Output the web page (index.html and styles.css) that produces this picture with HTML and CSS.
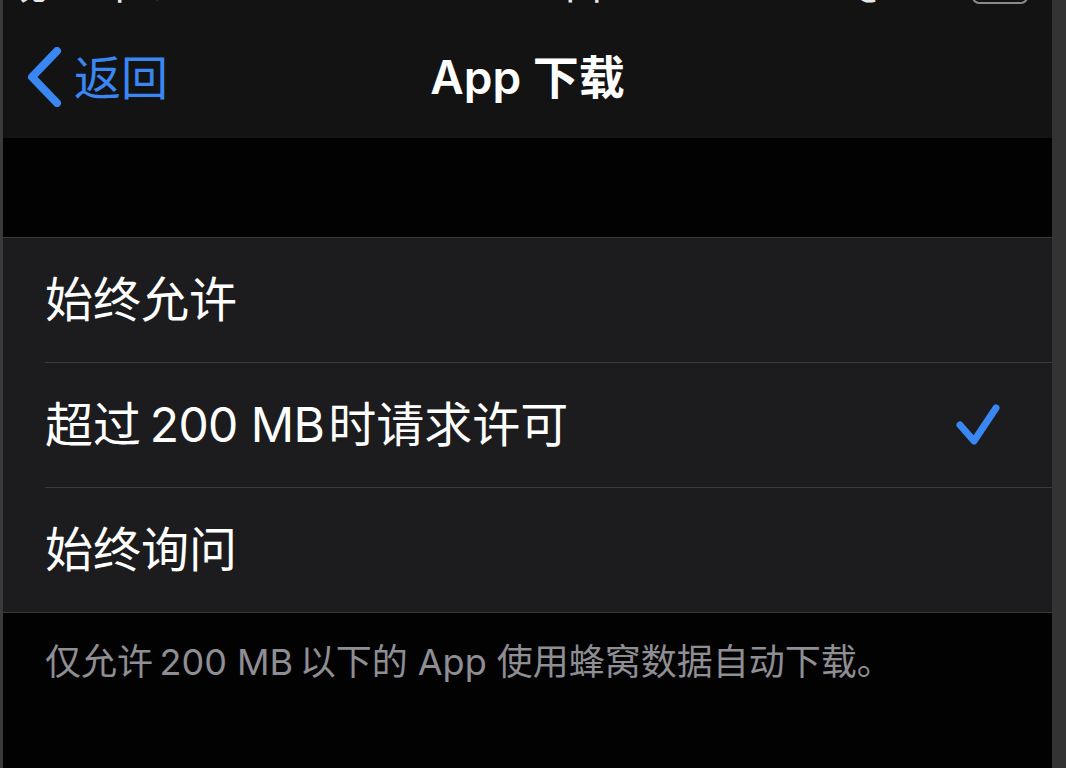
FILE: index.html
```html
<!DOCTYPE html>
<html lang="zh-CN">
<head>
<meta charset="utf-8">
<title>App 下载</title>
<link rel="stylesheet" href="styles.css">
</head>
<body>
<div class="screen">
  <div class="edge-left"></div>
  <div class="main">
    <div class="status">
      <div class="status-left"><span>无 SIM 卡</span><span class="wifi">⌔</span></div>
      <div class="status-center"><span>下午2:36</span></div>
      <div class="status-right"><span>@ 100%</span><span class="battery"></span></div>
    </div>
    <header class="nav">
      <a class="back">
        <svg class="chevron" width="40" height="60" viewBox="0 0 40 60">
          <path d="M31 4 L6 30 L31 56" fill="none" stroke="#3a86f2" stroke-width="8" stroke-linecap="round" stroke-linejoin="round"/>
        </svg>
        <span class="back-text">返回</span>
      </a>
      <h1 class="title">App 下载</h1>
      <div class="nav-spacer"></div>
    </header>
    <div class="gap"></div>
    <ul class="list">
      <li class="row"><div class="row-inner"><span class="label">始终允许</span></div></li>
      <li class="row"><div class="row-inner"><span class="label">超过&#8201;<span class="lat">200 MB</span>时请求许可</span>
        <svg class="check" width="48" height="48" viewBox="0 0 48 48">
          <path d="M6 24 L20 40 L42 7" fill="none" stroke="#3a86f2" stroke-width="7" stroke-linecap="round" stroke-linejoin="round"/>
        </svg></div></li>
      <li class="row last"><div class="row-inner"><span class="label">始终询问</span></div></li>
    </ul>
    <p class="footer">仅允许&#8201;200 MB&#8201;以下的 App 使用蜂窝数据自动下载。</p>
  </div>
  <div class="edge-right"></div>
</div>
</body>
</html>
```

FILE: styles.css
```css
* { box-sizing: border-box; }
html, body { margin: 0; padding: 0; background: #000; }
body {
  font-family: Inter, "Noto Sans CJK SC", sans-serif;
  width: 1066px;
  height: 768px;
  overflow: hidden;
}
.screen {
  display: flex;
  height: 768px;
}
.edge-left { width: 3px; background: #3a3a3a; }
.edge-right { width: 14px; background: #333334; }
.main {
  flex: 1;
  display: flex;
  flex-direction: column;
  background: #030203;
}
.status {
  height: 4px;
  background: #131313;
  display: flex;
  align-items: flex-end;
  justify-content: space-between;
  overflow: hidden;
  color: #e8e8e8;
  font-size: 26px;
  line-height: 1;
  font-weight: 600;
  padding: 0 24px 0 17px;
}
.status-left, .status-center, .status-right {
  display: flex;
  align-items: flex-end;
  gap: 12px;
}
.status-center { margin-left: 200px; }
.battery {
  display: block;
  width: 56px;
  height: 22px;
  border: 2px solid #8a8a8a;
  border-radius: 7px;
}
.nav {
  height: 134px;
  padding-top: 12px;
  background: #131313;
  display: grid;
  grid-template-columns: 1fr auto 1fr;
  align-items: center;
}
.back {
  display: flex;
  align-items: center;
  gap: 8px;
  padding-left: 23px;
  color: #3a86f2;
}
.chevron { display: block; }
.back-text {
  font-size: 47px;
  line-height: 1;
  font-weight: 400;
}
.title {
  margin: 0;
  color: #fff;
  font-size: 46px;
  line-height: 1;
  font-weight: 600;
}
.gap { height: 99px; }
.list {
  list-style: none;
  margin: 0;
  padding: 0;
  background: #1c1c1e;
  border-top: 1px solid #3a3a3c;
  border-bottom: 1px solid #3a3a3c;
}
.row { padding-left: 42px; }
.row-inner {
  height: 125px;
  display: flex;
  align-items: center;
  justify-content: space-between;
  padding-right: 50px;
  border-bottom: 1px solid #3a3a3c;
}
.row.last .row-inner { border-bottom: none; height: 124px; }
.label {
  color: #fff;
  font-size: 48px;
  line-height: 1;
}
.lat {
  letter-spacing: -0.6px;
  margin-right: 4px;
}
.check { display: block; }
.footer {
  margin: 0;
  padding: 24px 0 0 42px;
  color: #8e8e93;
  font-size: 36px;
  line-height: 1.4;
}
```
